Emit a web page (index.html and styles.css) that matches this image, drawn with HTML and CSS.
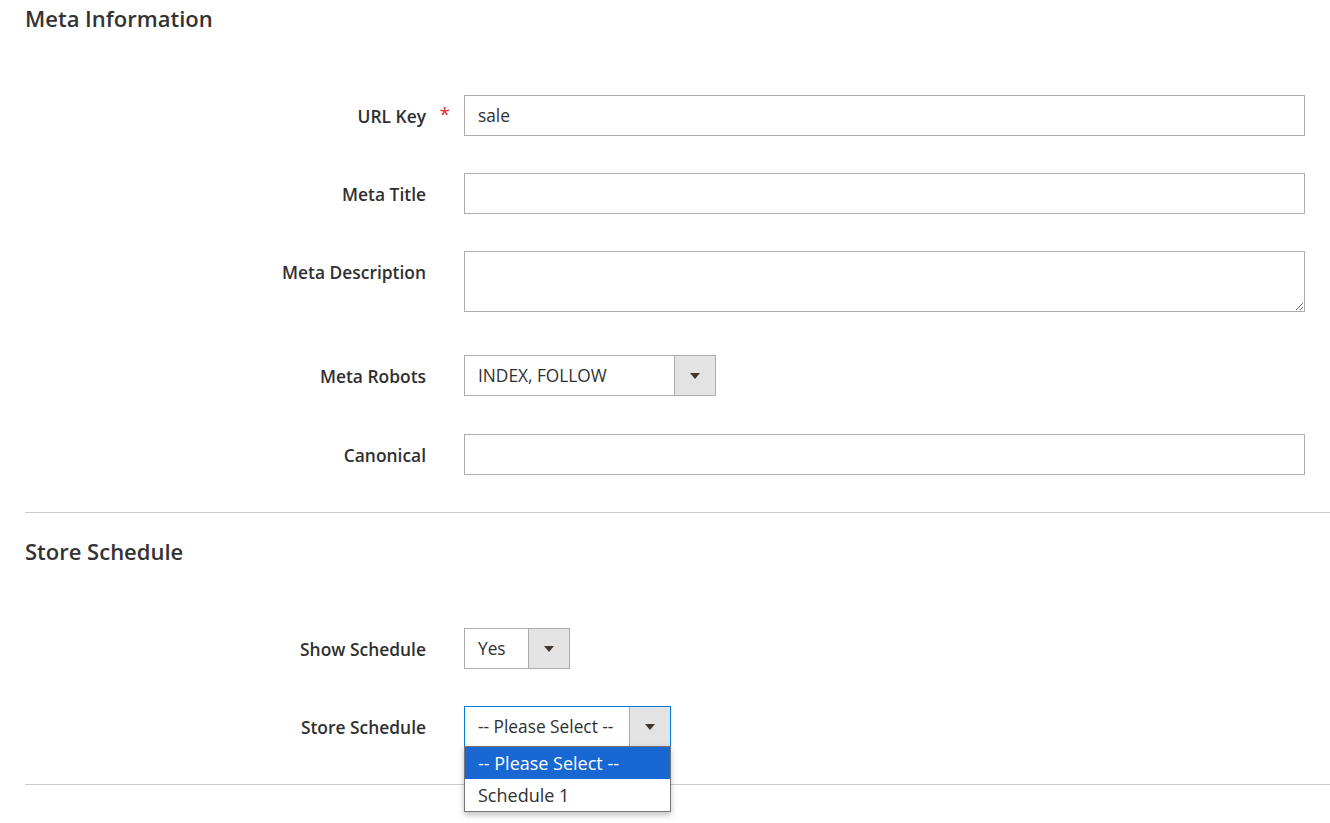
FILE: index.html
```html
<!DOCTYPE html>
<html lang="en">
<head>
    <meta charset="UTF-8">
    <title>Category - Search Engine Optimization</title>
    <link rel="stylesheet" href="styles.css">
</head>
<body>
<div class="page">
    <div class="section">
        <h2 class="section-title">Meta Information</h2>

        <div class="field">
            <label class="field-label required" for="url-key">URL Key</label>
            <div class="field-control">
                <input id="url-key" class="input-text" type="text" value="sale">
            </div>
        </div>

        <div class="field">
            <label class="field-label" for="meta-title">Meta Title</label>
            <div class="field-control">
                <input id="meta-title" class="input-text" type="text">
            </div>
        </div>

        <div class="field field-tall">
            <label class="field-label" for="meta-description">Meta Description</label>
            <div class="field-control">
                <textarea id="meta-description" class="textarea"></textarea>
            </div>
        </div>

        <div class="field field-loose">
            <label class="field-label">Meta Robots</label>
            <div class="field-control">
                <div class="select select-robots">
                    <span class="select-value">INDEX, FOLLOW</span>
                    <span class="select-arrow"><svg width="10" height="6" viewBox="0 0 10 6"><path d="M0 0h10L5 6z"/></svg></span>
                </div>
            </div>
        </div>

        <div class="field">
            <label class="field-label" for="canonical">Canonical</label>
            <div class="field-control">
                <input id="canonical" class="input-text" type="text">
            </div>
        </div>
    </div>

    <div class="section">
        <h2 class="section-title">Store Schedule</h2>

        <div class="field">
            <label class="field-label">Show Schedule</label>
            <div class="field-control">
                <div class="select select-yes">
                    <span class="select-value">Yes</span>
                    <span class="select-arrow"><svg width="10" height="6" viewBox="0 0 10 6"><path d="M0 0h10L5 6z"/></svg></span>
                </div>
            </div>
        </div>

        <div class="field">
            <label class="field-label">Store Schedule</label>
            <div class="field-control">
                <div class="select select-schedule is-open">
                    <span class="select-value">-- Please Select --</span>
                    <span class="select-arrow"><svg width="10" height="6" viewBox="0 0 10 6"><path d="M0 0h10L5 6z"/></svg></span>
                    <ul class="select-menu">
                        <li class="select-option selected">-- Please Select --</li>
                        <li class="select-option">Schedule 1</li>
                    </ul>
                </div>
            </div>
        </div>
    </div>
</div>
</body>
</html>
```

FILE: styles.css
```css
html, body {
    margin: 0;
    padding: 0;
    background: #fff;
}

body {
    min-height: 100vh;
    font-family: "Open Sans", "Liberation Sans", sans-serif;
    color: #303030;
}

.page {
    padding-left: 25px;
    padding-bottom: 40px;
}

.section {
    padding-bottom: 37px;
    border-bottom: 1px solid #cccccc;
}

.section + .section {
    padding-top: 20px;
}

.section-title {
    margin: 0 0 59px;
    font-size: 22px;
    font-weight: 600;
    line-height: 36px;
    color: #333333;
}

.field {
    display: grid;
    grid-template-columns: 439px 1fr;
    margin-bottom: 37px;
}

.field:last-child {
    margin-bottom: 0;
}

.field-tall {
    margin-bottom: 43px;
}

.field-loose {
    margin-bottom: 38px;
}

.field-label {
    position: relative;
    padding-top: 1px;
    padding-right: 38px;
    text-align: right;
    font-size: 17.4px;
    font-weight: 600;
    line-height: 40px;
    color: #303030;
}

.field-label.required::after {
    content: "*";
    position: absolute;
    right: 14px;
    top: -1px;
    color: #e22626;
    font-size: 19px;
    font-weight: 400;
}

.field-control {
    padding-right: 25px;
}

.input-text,
.textarea {
    display: block;
    box-sizing: border-box;
    width: 100%;
    margin: 0;
    padding: 0 13px;
    border: 1px solid #adadad;
    border-radius: 0;
    background: #fff;
    font-family: inherit;
    font-size: 17.3px;
    color: #303030;
    outline: none;
}

.input-text {
    height: 41px;
}

.textarea {
    height: 61px;
    padding-top: 8px;
    resize: vertical;
}

/* custom select: value box plus grey arrow button */
.select {
    position: relative;
    display: flex;
    box-sizing: border-box;
    height: 41px;
    border: 1px solid #adadad;
    background: #fff;
    font-size: 17.3px;
    line-height: 39px;
    color: #303030;
}

.select-value {
    flex: 1;
    padding-left: 13px;
    white-space: nowrap;
}

.select-arrow {
    display: flex;
    align-items: center;
    justify-content: center;
    width: 40px;
    border-left: 1px solid #adadad;
    background: #e3e3e3;
}

.select-arrow svg {
    fill: #41362f;
}

.select-robots {
    width: 252px;
}

.select-yes {
    width: 106px;
}

.select-schedule {
    width: 207px;
}

.select.is-open {
    border-color: #007bdb;
}

.select-menu {
    position: absolute;
    top: 39px;
    left: -1px;
    right: -1px;
    margin: 0;
    padding: 0;
    list-style: none;
    background: #fff;
    border: 1px solid #767676;
    box-shadow: 0 3px 6px rgba(0, 0, 0, 0.25);
    z-index: 10;
}

.select-option {
    height: 32px;
    padding-left: 13px;
    font-size: 18px;
    line-height: 32px;
    color: #303030;
}

.select-option.selected {
    background: #1967d2;
    color: #fff;
}
```
